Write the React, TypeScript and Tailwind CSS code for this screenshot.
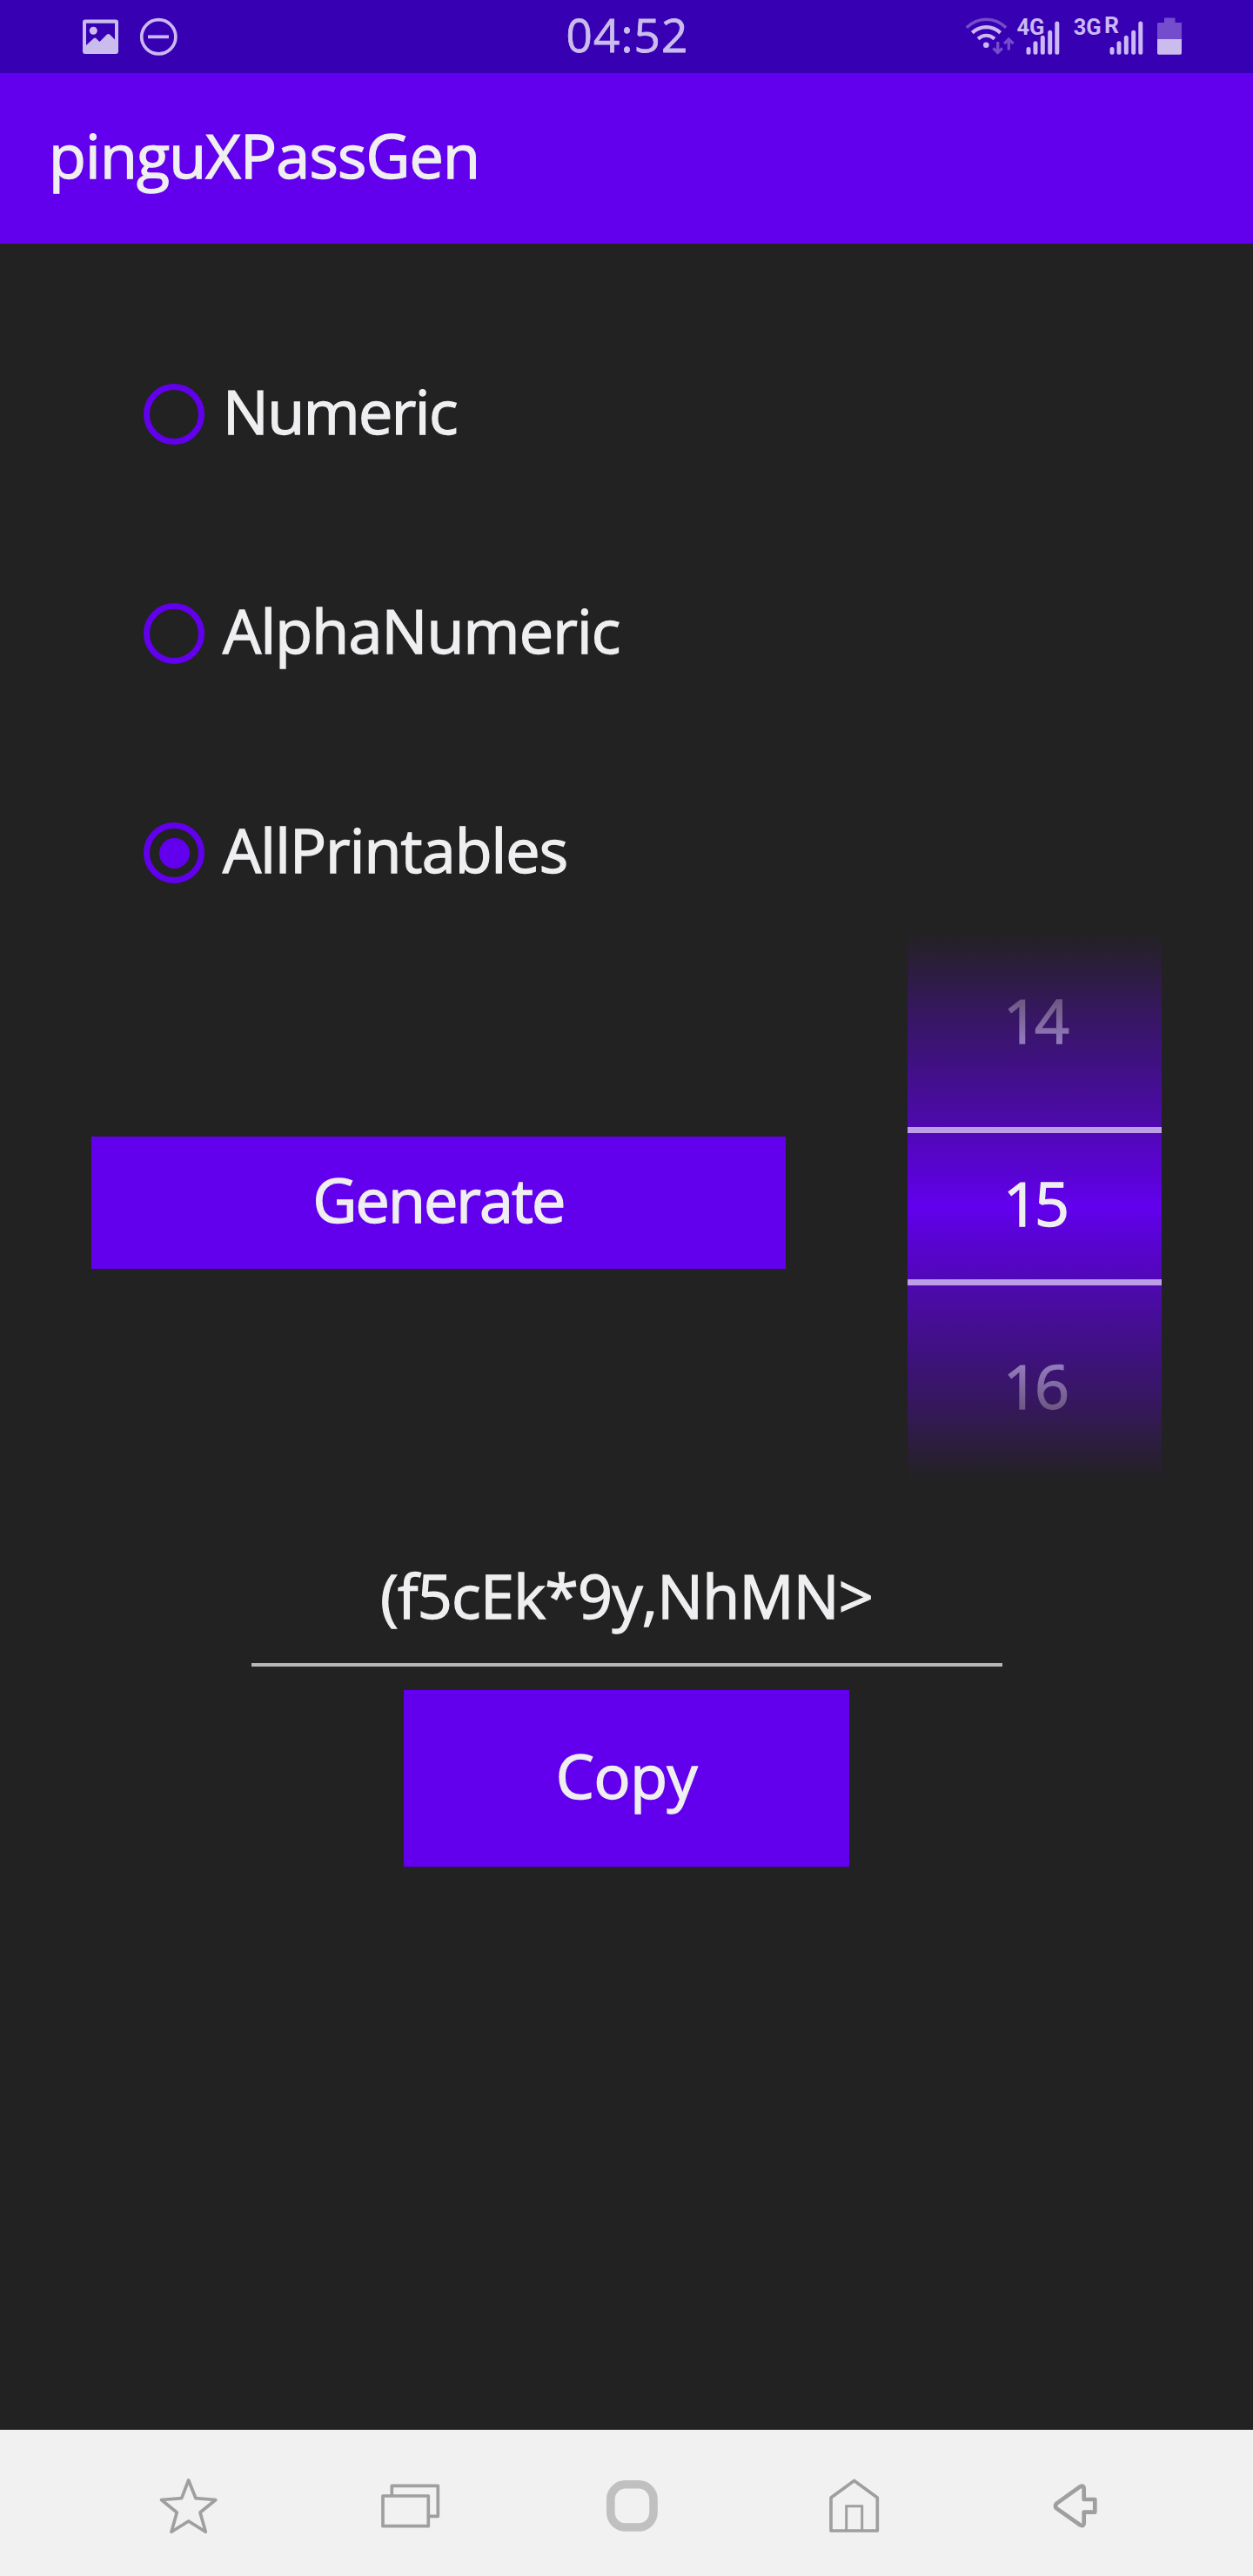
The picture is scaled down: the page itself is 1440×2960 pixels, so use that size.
import { useState } from "react";

const MODES = [
  { label: "Numeric", tracking: "tracking-[-1.5px]" },
  { label: "AlphaNumeric", tracking: "tracking-[-0.8px]" },
  { label: "AllPrintables", tracking: "tracking-[-0.9px]" },
];

function NotificationIcons() {
  return (
    <svg width="112" height="84" viewBox="95 0 112 84" fill="none">
      <path
        fillRule="evenodd"
        fill="#cbbcee"
        d="M98 22.5H133Q136 22.5 136 25.5V59Q136 62 133 62H98Q95 62 95 59V25.5Q95 22.5 98 22.5ZM99 26.8V52L107.5 44.2Q109 43 110.5 44.2L114.5 48L122.7 39.8Q124.5 38.2 126.3 39.8L132 45.5V26.8Z"
      />
      <circle cx="107.3" cy="35.3" r="4.5" fill="#cbbcee" />
      <circle cx="182.3" cy="42.3" r="19.6" stroke="#cbb8f4" strokeWidth="3.7" />
      <path d="M170 42.3H194" stroke="#cbb8f4" strokeWidth="3.8" />
    </svg>
  );
}

function SystemIcons() {
  return (
    <svg width="250" height="84" viewBox="1108 0 250 84" fill="none">
      <g strokeWidth="3.6">
        <path d="M1110.8 31.8C1124 19 1143 19 1156.200 31.800" stroke="#744dcc" />
        <path d="M1117.300 37.600C1127 29 1140 29 1149.700 37.600" stroke="#cbb8f4" strokeWidth="4.2" />
        <path d="M1124 44.600C1130 39.500 1137 39.500 1143 44.600" stroke="#cbb8f4" strokeWidth="4.2" />
      </g>
      <circle cx="1133.3" cy="51.800" r="3.3" fill="#cbb8f4" />
      <path d="M1146.700 48V60M1141.500 55.300L1146.700 60.500L1151.900 55.300" stroke="#744dcc" strokeWidth="3.3" />
      <path d="M1159.300 57.500V45M1154.100 50.200L1159.300 45L1164.500 50.200" stroke="#744dcc" strokeWidth="3.3" />
      <g fill="#cbb8f4" fontFamily="Roboto, sans-serif" fontWeight="700">
        <text x="1168.500" y="40.300" fontSize="26" textLength="32" lengthAdjust="spacingAndGlyphs">4G</text>
        <text x="1233.700" y="40.300" fontSize="26" textLength="32" lengthAdjust="spacingAndGlyphs">3G</text>
        <text x="1269" y="38" fontSize="25" textLength="17" lengthAdjust="spacingAndGlyphs">R</text>
      </g>
      <g stroke="#cbb8f4" strokeWidth="5" strokeLinecap="round">
        <path d="M1182 56.500V60.300M1190 49.700V60.300M1198.300 43.300V60.300M1206.700 37.300V60.300M1214.800 27V60.300" />
        <path d="M1278 56.500V60.300M1286 49.700V60.300M1294.300 43.300V60.300M1302.700 37.300V60.300M1310.800 27V60.300" />
      </g>
      <path d="M1338 20.500H1350.500V26H1358V45H1330V27.500Q1330 26 1331.500 26H1338Z" fill="#744dcc" />
      <path d="M1330 45H1358V61Q1358 62.700 1356.300 62.700H1331.700Q1330 62.700 1330 61Z" fill="#cbbcee" />
    </svg>
  );
}

function StatusBar() {
  return (
    <div className="flex h-[84px] items-center justify-between bg-[#3700b3] pl-[95px] pr-[82px]">
      <NotificationIcons />
      <span className="ml-[127px] pb-[5px] text-[53px] leading-none tracking-[1.2px] text-[#cbbcee] [-webkit-text-stroke:0.8px]">04:52</span>
      <SystemIcons />
    </div>
  );
}

type RadioProps = { label: string; tracking: string; checked: boolean; onSelect: () => void };

function Radio({ label, tracking, checked, onSelect }: RadioProps) {
  return (
    <button role="radio" aria-checked={checked} onClick={onSelect} className={`flex h-[70px] items-center ${tracking}`}>
      <span className="flex size-[70px] items-center justify-center rounded-full border-[7px] border-[#6200ee]">
        {checked && <span className="size-[35px] rounded-full bg-[#6200ee]" />}
      </span>
      <span className="pb-2 pl-[21px] leading-none">{label}</span>
    </button>
  );
}

function LengthPicker() {
  return (
    <div className="relative ml-[140px] grid h-[630px] w-[292px] grid-rows-3 bg-[linear-gradient(to_bottom,#222222_0px,#2e1c44_52px,#371762_94px,#3d1279_136px,#450e92_178px,#4c0aaa_216px,#5306bf_241px,#5a03d6_283px,#6200ee_315px,#5a03d6_347px,#5306bf_389px,#4c0aaa_414px,#450e92_452px,#3d1279_494px,#371762_536px,#2e1c44_578px,#222222_630px)] text-center leading-[202px] tracking-[-4px]">
      <span className="bg-linear-to-b from-[#6d5883] from-[37%] to-[#937bbd] to-[61%] bg-clip-text text-transparent">14</span>
      <span>15</span>
      <span className="bg-linear-to-b from-[#937bbd] from-[37%] to-[#6d5883] to-[61%] bg-clip-text text-transparent">16</span>
      <div className="absolute inset-x-0 top-[224px] h-[182px] border-y-[7px] border-[#bd9fe8]" />
    </div>
  );
}

function NavigationBar() {
  return (
    <nav className="flex h-[168px] items-start gap-[175px] bg-[#f1f1f1] pl-[177px] pt-12">
      <svg width="80" height="80" fill="none" stroke="#9f9f9f" strokeWidth="3.7" strokeLinejoin="round">
        <path d="M39.700 10L48 30.700L70.800 32.500L53 47L59.300 69.300L39.700 57L20 69.300L26.300 47L8.500 32.500L31.700 30.700Z" />
      </svg>
      <svg width="80" height="80" fill="none" stroke="#9f9f9f" strokeWidth="3.7" strokeLinejoin="round">
        <path d="M8 28H60.300V62.700H8ZM18.300 28V16.300H71.300V51.300H60.300" />
      </svg>
      <svg width="80" height="80" fill="none" stroke="#c0c0c0" strokeWidth="9.6">
        <rect x="14.800" y="14.800" width="49.200" height="49.200" rx="17" />
      </svg>
      <svg width="80" height="80" fill="none" stroke="#9f9f9f" strokeWidth="3.7" strokeLinejoin="round">
        <path d="M13 30L39.700 10.500L66.300 30V68H13Z" />
        <path d="M30.700 68V39.700H48.700V68" strokeWidth="3" strokeLinejoin="miter" />
      </svg>
      <svg width="80" height="80" fill="none" stroke="#9f9f9f" strokeWidth="4.7" strokeLinejoin="round">
        <path d="M17.300 36.700L44.500 17.200Q48.700 15.500 48.700 19.500V32H61.300V46.700H48.700V59.500Q48.700 63.500 44.500 61.500L17.300 42.300Q14.500 39.500 17.300 36.700Z" />
      </svg>
    </nav>
  );
}

export default function App() {
  const [mode, setMode] = useState("AllPrintables");
  return (
    <div className="flex h-[2960px] w-[1440px] flex-col overflow-hidden bg-[#222222] font-['Open_Sans',sans-serif] text-[70px] text-[#efeef0] [-webkit-text-stroke:1.4px]">
      <StatusBar />
      <header className="flex h-[196px] items-center bg-[#6200ee] pb-2 pl-14">
        <h1 className="leading-none tracking-[-0.8px]">pinguXPassGen</h1>
      </header>
      <main className="flex grow flex-col">
        <div role="radiogroup" className="flex flex-col gap-[182px] pl-[165px] pt-[161px]">
          {MODES.map((m) => (
            <Radio key={m.label} label={m.label} tracking={m.tracking} checked={m.label === mode} onSelect={() => setMode(m.label)} />
          ))}
        </div>
        <div className="mt-14 flex items-start pl-[105px]">
          <button className="mt-[235px] h-[152px] w-[798px] bg-[#6200ee] pb-2 leading-none tracking-[-1.9px]">Generate</button>
          <LengthPicker />
        </div>
        <div className="mt-[54px] flex h-[160px] w-[863px] justify-center self-center border-b-[4px] border-[#b8b6b7] leading-[156px] tracking-[-0.7px]">
          (f5cEk*9y,NhMN&gt;
        </div>
        <button className="mt-[27px] h-[203px] w-[512px] self-center bg-[#6200ee] pb-2 leading-none tracking-[-0.4px]">Copy</button>
      </main>
      <NavigationBar />
    </div>
  );
}
